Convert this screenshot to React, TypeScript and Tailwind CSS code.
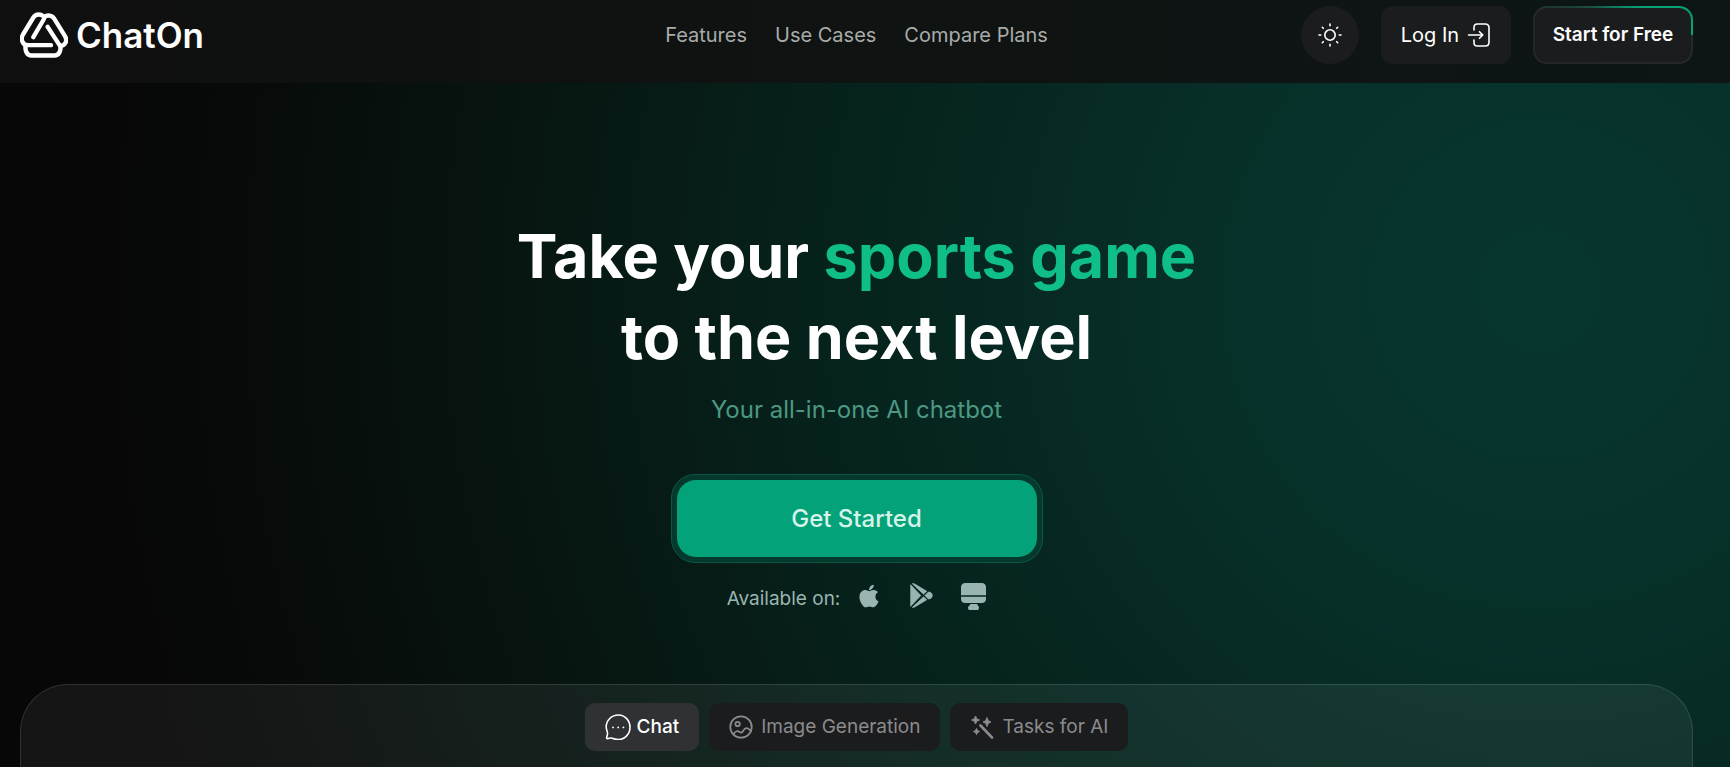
import { FaApple } from "react-icons/fa";

function Logo() {
  return (
    <svg viewBox="60 38 144 137" className="h-[46px] w-12" fill="none" stroke="currentColor" strokeWidth="13" strokeLinecap="round" strokeLinejoin="round" aria-hidden="true">
      <path d="M100 113 131 60c4-9-5-15-15-15-7 0-12 3-16 9L69 105c-8 14-2 32 15 32h69" />
      <path d="M133 53c9-8 23-6 30 5l32 52c8 14 1 29-15 29L143 82" />
      <path d="M76 139c0 19 5 29 18 29h70c13 0 18-10 18-29" />
    </svg>
  );
}

function SunIcon() {
  return (
    <svg viewBox="0 0 24 24" className="size-6" fill="none" stroke="currentColor" strokeWidth="1.6" strokeLinecap="round" aria-hidden="true">
      <circle cx="12" cy="12" r="5.2" />
      <path d="M12 1v1.8M12 21.2V23M1 12h1.8M21.2 12H23M4.3 4.3l1 1M18.7 18.7l1 1M4.3 19.7l1-1M18.7 5.3l1-1" />
    </svg>
  );
}

function LoginIcon() {
  return (
    <svg viewBox="0 0 24 24" className="size-6" fill="none" stroke="currentColor" strokeWidth="1.6" strokeLinecap="round" strokeLinejoin="round" aria-hidden="true">
      <path d="M7 7V4.6C7 2 8.300 1 10.200 1h8c2.400 0 3.800 1.400 3.800 3.800v14.400c0 2.400-1.400 3.800-3.800 3.800h-8C8.300 23 7 22 7 19.400V17" />
      <path d="M1.500 12H15.800M12.500 8.700l3.300 3.300-3.300 3.300" />
    </svg>
  );
}

function PlayStoreIcon() {
  return (
    <svg viewBox="208 41 68 76" className="h-[25px] w-[23px]" fill="currentColor" stroke="currentColor" strokeWidth="2" strokeLinejoin="round" aria-hidden="true">
      <path d="M209 46 240 79 209 112Z" />
      <path d="M214 43c4-1 6 0 9 2l35 21-10 9Z" />
      <path d="M214 115c4 1 6 0 9-2l35-21-10-9Z" />
      <path d="M252 79l10-10c6-2 13 3 13 10s-7 12-13 10Z" />
    </svg>
  );
}

function DesktopIcon() {
  return (
    <svg viewBox="0 0 25 27" className="h-[27px] w-[25px]" fill="currentColor" aria-hidden="true">
      <path d="M0 12V4.500C0 1.500 1.500 0 4.500 0h16C23.500 0 25 1.500 25 4.500V12.300H0ZM0 13.700h25v1.800c0 3-1.500 4.500-4.500 4.500h-16C1.500 20 0 18.500 0 15.500Z" />
      <path d="M9.500 21h6.500l2 3.200c0 2-.6 2.800-2 2.800H9c-1.400 0-2-.8-2-2.800Z" />
    </svg>
  );
}

function ChatIcon() {
  return (
    <svg viewBox="0 0 26 26" className="size-[26px]" fill="none" stroke="currentColor" strokeWidth="1.6" strokeLinecap="round" strokeLinejoin="round" aria-hidden="true">
      <path d="M13.400 1C6.600 1 1.200 6.200 1.200 13c0 2 .6 3.600 1.200 5.200.6 1.700-.3 3.600-.8 5.400-.2.800.3 1.200 1.100 1 1.500-.4 3-.9 4.500-.3 2 .9 4 1.200 6.200 1.200C20 25.500 25 20 25 13.300 25 6.500 20 1 13.400 1Z" />
      <path d="M8 13.400h.01M13.200 13.400h.01M18.400 13.400h.01" strokeWidth="1.900" />
    </svg>
  );
}

function ImageIcon() {
  return (
    <svg viewBox="0 0 24 24" className="size-6" fill="none" stroke="currentColor" strokeWidth="1.800" strokeLinecap="round" strokeLinejoin="round" aria-hidden="true">
      <circle cx="12" cy="12" r="10.700" />
      <circle cx="8.600" cy="9" r="2.200" />
      <path d="M5 18.500c1.500-2.500 3.500-3 5.500-1.500 2 1.300 3 .2 4-1.600 1.600-2.800 4-3 5.600-1l2 1.800" />
    </svg>
  );
}

function WandIcon() {
  return (
    <svg viewBox="0 0 24 24" className="size-6" fill="currentColor" stroke="currentColor" strokeLinejoin="round" aria-hidden="true">
      <path d="M5.500 1 6.900 4 9.500 5 6.900 6 5.500 9 4.100 6 1.500 5 4.100 4ZM17 2.500 18.300 5.700 21 7 18.300 8.300 17 11.500 15.700 8.300 13 7 15.700 5.700ZM6.500 13.500 7.500 15.500 9.500 16.500 7.500 17.500 6.500 19.500 5.500 17.500 3.500 16.500 5.500 15.500Z" strokeWidth="1" />
      <path d="M10.500 10.500 22 22.500" strokeWidth="2.600" strokeLinecap="round" />
    </svg>
  );
}

const links = ["Features", "Use Cases", "Compare Plans"];

const tabs = [
  { label: "Chat", Icon: ChatIcon, active: true },
  { label: "Image Generation", Icon: ImageIcon, active: false },
  { label: "Tasks for AI", Icon: WandIcon, active: false },
];

export default function App() {
  return (
    <div className="flex min-h-screen flex-col bg-[#070707] bg-[radial-gradient(circle_1440px_at_89%_290px,#07372f_0%,#07312a_20%,#072a24_34%,#06231d_48%,#071c17_60%,#07130f_76%,#070b0a_90%,#070707_100%)] font-['Inter',sans-serif] text-white">
      <header className="grid grid-cols-[1fr_auto_1fr] items-center bg-linear-to-r from-[#0f0f0f] via-[#0f1312] to-[#0d1615] pt-1.5 pr-[37px] pb-[19px] pl-5">
        <a href="#home" className="flex items-center gap-2 text-[35px] leading-[46px] font-semibold">
          <Logo />
          <span>ChatOn</span>
        </a>
        <nav className="flex gap-7 text-xl leading-6 text-[#a9abaa]">
          {links.map((link) => (
            <a key={link} href="#features">{link}</a>
          ))}
        </nav>
        <div className="flex items-center justify-end gap-[22px] leading-6">
          <button aria-label="Switch theme" className="flex size-[58px] items-center justify-center rounded-full bg-[#1b1c1e]">
            <SunIcon />
          </button>
          <button className="flex h-[58px] w-[130px] items-center justify-center gap-2 rounded-xl bg-[#1b1c1e] text-xl">
            Log In
            <LoginIcon />
          </button>
          <button className="h-[58px] w-40 rounded-[14px] bg-[conic-gradient(from_290deg,#22332f_0deg,#0c8264_80deg,#07a176_120deg,#07a176_160deg,#27282a_160deg,#242628_360deg)] p-0.5 text-[19px] font-semibold">
            <span className="flex h-full items-center justify-center rounded-xl bg-[#1b1c1e]">Start for Free</span>
          </button>
        </div>
      </header>

      <main className="flex grow flex-col items-center pt-[133px] pr-[37px] pl-5">
        <h1 className="text-center text-[61px] leading-[81px] font-bold">
          Take your <span className="text-[#10bf88]">sports game</span>
          <br />
          to the next level
        </h1>
        <p className="mt-4 text-2xl leading-8 text-[#4c9883]">Your all-in-one AI chatbot</p>

        <div className="mt-12 rounded-3xl border border-[#0a5743] bg-[#06392e] p-[5px]">
          <button className="h-[77px] w-[360px] rounded-[19px] bg-[#04a279] text-2xl font-medium text-[#d6f3ea]">
            Get Started
          </button>
        </div>

        <div className="mt-5 flex items-start text-[#9ab5b1]">
          <span className="text-[19px] leading-8">Available on:</span>
          <a href="#ios" aria-label="App Store" className="ml-4">
            <FaApple className="size-[26px]" />
          </a>
          <a href="#android" aria-label="Google Play" className="ml-7">
            <PlayStoreIcon />
          </a>
          <a href="#desktop" aria-label="Desktop" className="ml-7">
            <DesktopIcon />
          </a>
        </div>

        <section className="mt-[69px] flex w-full grow justify-center gap-2.5 rounded-t-[48px] border border-b-0 border-white/12 bg-white/6 pt-[18px] pb-4">
          {tabs.map(({ label, Icon, active }) => (
            <button
              key={label}
              className={
                active
                  ? "flex h-12 items-center gap-1.5 rounded-[10px] bg-[#303135] px-5 text-[19px] font-medium text-white"
                  : "flex h-12 items-center gap-2 rounded-[10px] bg-[#1b1c1e] px-5 text-[19px] text-[#8b8b8d]"
              }
            >
              <Icon />
              {label}
            </button>
          ))}
        </section>
      </main>
    </div>
  );
}
